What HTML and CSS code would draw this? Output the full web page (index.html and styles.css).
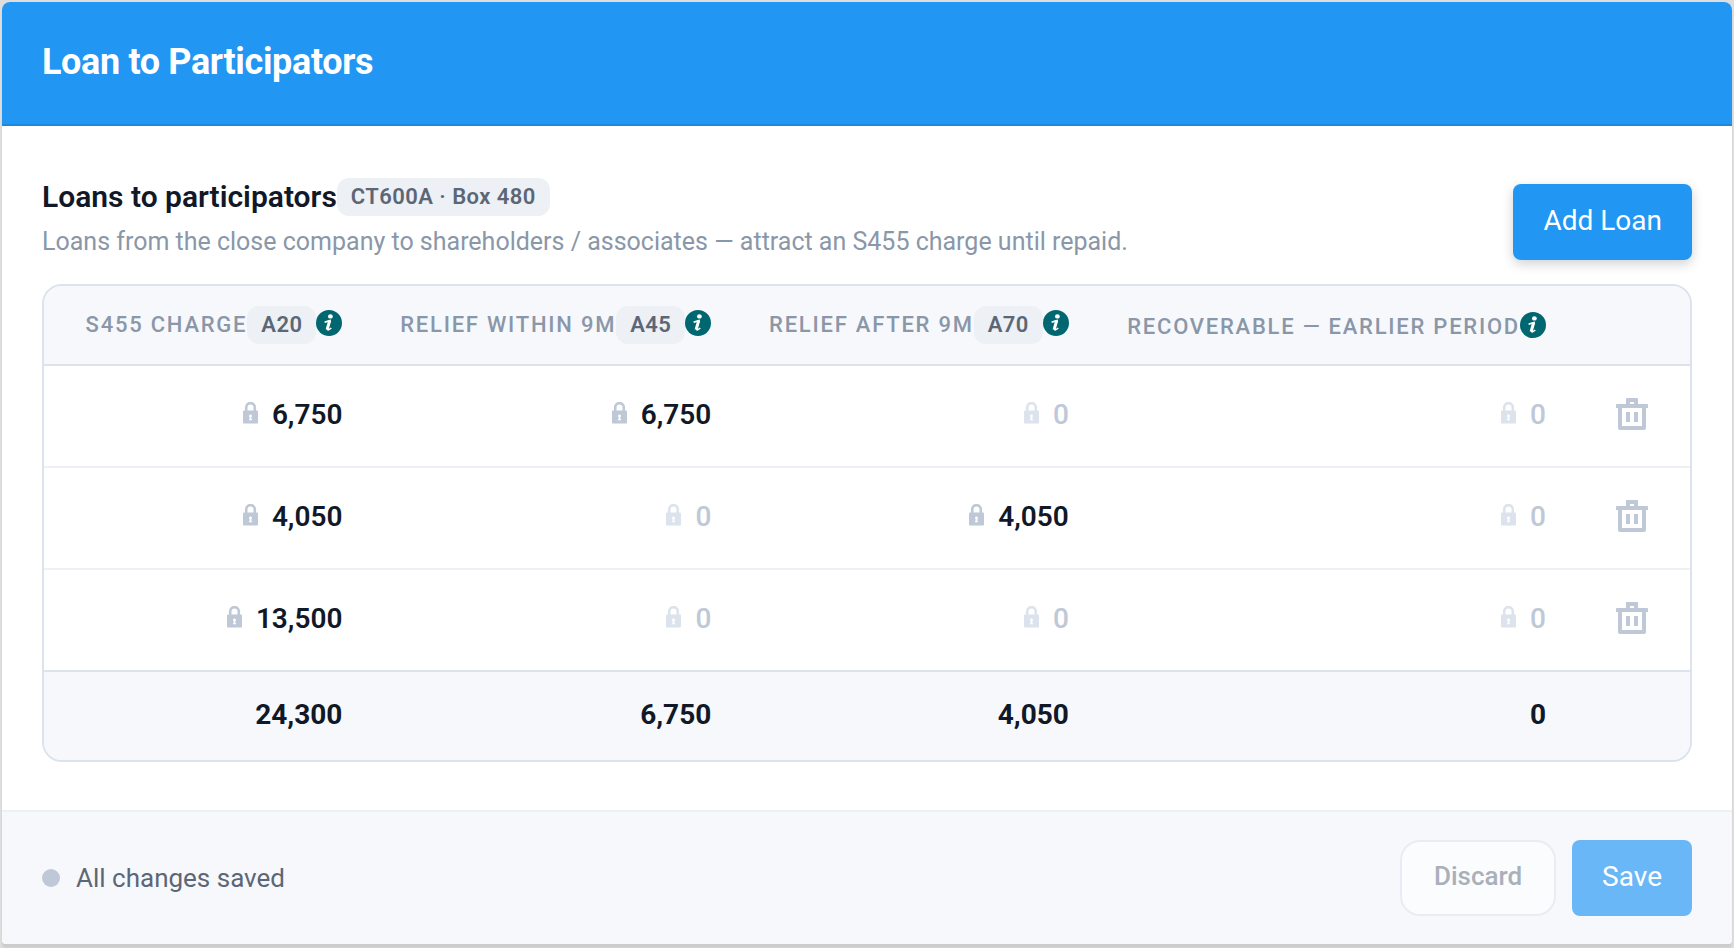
FILE: index.html
```html
<!DOCTYPE html>
<html lang="en">
<head>
    <meta charset="UTF-8">
    <meta name="viewport" content="width=device-width, initial-scale=1.0">
    <title>Loan to Participators</title>
    <link rel="stylesheet" href="styles.css">
</head>
<body>
    <!-- Shared icons -->
    <svg class="sprite" aria-hidden="true">
        <symbol id="icon-info" viewBox="0 0 26 26">
            <circle cx="13" cy="13" r="13" fill="#006770"/>
            <ellipse cx="14.4" cy="6.4" rx="2.4" ry="2.2" fill="#fff"/>
            <path d="M8.6 12.2q2.6-1 5.4-1.6l-2.2 7.6q-.5 2 .8 1.6.9-.3 2.7-1.8" fill="none" stroke="#fff" stroke-width="1.6"/>
            <path d="M13.7 10.6l-2.6 9" stroke="#fff" stroke-width="3"/>
        </symbol>
        <symbol id="icon-lock" viewBox="0 0 15 22">
            <path d="M3.2 9V5.4a4.3 4.3 0 0 1 8.6 0V9" fill="none" stroke="currentColor" stroke-width="2.6"/>
            <rect x="0" y="8.5" width="15" height="13" rx="1" fill="currentColor"/>
            <path d="M7.5 12.4a1.5 1.5 0 0 1 .9 2.7v2.2h.7v1H5.9v-1h.7v-2.2a1.5 1.5 0 0 1 .9-2.7z" fill="#fff"/>
        </symbol>
        <symbol id="icon-trash" viewBox="0 0 34 32">
            <path fill-rule="evenodd" fill="currentColor" d="M12 0h10q1 0 1 1v5h9q1 0 1 1v3h-2v20q0 2-2 2H5q-2 0-2-2V10H1V7q0-1 1-1h9V1q0-1 1-1zM15 4v2h4V4zM7 10v18h20V10z"/>
            <path fill="currentColor" d="M11 14h4v10h-4zM19 14h4v10h-4z"/>
        </symbol>
    </svg>

    <div class="card">
        <header class="card-header">
            <h1>Loan to Participators</h1>
        </header>

        <main class="card-body">
            <div class="section-head">
                <div>
                    <h2>Loans to participators<span class="tag">CT600A · Box 480</span></h2>
                    <p>Loans from the close company to shareholders / associates — attract an S455 charge until repaid.</p>
                </div>
                <button type="button" class="btn btn-primary btn-raised">Add Loan</button>
            </div>

            <div class="table-wrap">
                <table>
                    <thead>
                        <tr>
                            <th scope="col">S455 charge<span class="tag">A20</span><svg class="info"><use href="#icon-info"/></svg></th>
                            <th scope="col">Relief within 9m<span class="tag">A45</span><svg class="info"><use href="#icon-info"/></svg></th>
                            <th scope="col">Relief after 9m<span class="tag">A70</span><svg class="info"><use href="#icon-info"/></svg></th>
                            <th scope="col">Recoverable — earlier period<svg class="info"><use href="#icon-info"/></svg></th>
                            <td class="actions"></td>
                        </tr>
                    </thead>
                    <tbody>
                        <tr>
                            <td><svg class="lock"><use href="#icon-lock"/></svg>6,750</td>
                            <td><svg class="lock"><use href="#icon-lock"/></svg>6,750</td>
                            <td class="zero"><svg class="lock"><use href="#icon-lock"/></svg>0</td>
                            <td class="zero"><svg class="lock"><use href="#icon-lock"/></svg>0</td>
                            <td class="actions"><button type="button" class="btn-icon" aria-label="Delete loan"><svg><use href="#icon-trash"/></svg></button></td>
                        </tr>
                        <tr>
                            <td><svg class="lock"><use href="#icon-lock"/></svg>4,050</td>
                            <td class="zero"><svg class="lock"><use href="#icon-lock"/></svg>0</td>
                            <td><svg class="lock"><use href="#icon-lock"/></svg>4,050</td>
                            <td class="zero"><svg class="lock"><use href="#icon-lock"/></svg>0</td>
                            <td class="actions"><button type="button" class="btn-icon" aria-label="Delete loan"><svg><use href="#icon-trash"/></svg></button></td>
                        </tr>
                        <tr>
                            <td><svg class="lock"><use href="#icon-lock"/></svg>13,500</td>
                            <td class="zero"><svg class="lock"><use href="#icon-lock"/></svg>0</td>
                            <td class="zero"><svg class="lock"><use href="#icon-lock"/></svg>0</td>
                            <td class="zero"><svg class="lock"><use href="#icon-lock"/></svg>0</td>
                            <td class="actions"><button type="button" class="btn-icon" aria-label="Delete loan"><svg><use href="#icon-trash"/></svg></button></td>
                        </tr>
                    </tbody>
                    <tfoot>
                        <tr>
                            <td>24,300</td>
                            <td>6,750</td>
                            <td>4,050</td>
                            <td>0</td>
                            <td class="actions"></td>
                        </tr>
                    </tfoot>
                </table>
            </div>
        </main>

        <footer class="card-footer">
            <div class="status"><span class="dot"></span>All changes saved</div>
            <div class="buttons">
                <button type="button" class="btn btn-outline" disabled>Discard</button>
                <button type="button" class="btn btn-primary" disabled>Save</button>
            </div>
        </footer>
    </div>
</body>
</html>
```
FILE: styles.css
```css
* { margin: 0; padding: 0; box-sizing: border-box; }
body {
    font-family: Roboto, sans-serif;
    background: #dedede;
    color: #111827;
    padding: 2px 2px 4px;
}
.sprite {
    display: none;
}
.card {
    background: white;
    border-radius: 8px 8px 4px 4px;
    overflow: hidden;
    box-shadow: 0 4px 2px rgba(0, 0, 0, 0.08);
}
.card-header {
    background: #2196f3;
    border-bottom: 2px solid #1e88dc;
    padding: 38px 40px 40px;
}
h1 {
    font-size: 36px;
    font-weight: 700;
    line-height: 44px;
    letter-spacing: -0.01em;
    color: white;
}
.card-body {
    padding: 52px 40px 48px;
}

/* Section heading */
.section-head {
    display: flex;
    justify-content: space-between;
    align-items: flex-end;
    margin-bottom: 24px;
}
h2 {
    display: flex;
    align-items: center;
    font-size: 30px;
    font-weight: 600;
    line-height: 38px;
    margin-bottom: 8px;
}
.section-head p {
    font-size: 25px;
    line-height: 36px;
    color: #8a97a8;
}
.tag {
    display: inline-block;
    padding: 0 14px;
    border-radius: 12px;
    background: #edf0f5;
    color: #5b6776;
    font-size: 22px;
    font-weight: 600;
    line-height: 38px;
    letter-spacing: 0.02em;
}

/* Buttons */
.btn {
    height: 76px;
    padding: 0 30px 4px;
    border: none;
    border-radius: 8px;
    font-family: inherit;
    font-size: 28px;
    cursor: pointer;
}
.btn:disabled {
    cursor: default;
}
.btn-primary {
    background: #2196f3;
    color: white;
}
.btn-primary:disabled {
    background: #6ab7f7;
}
.btn-raised {
    box-shadow: 0 4px 12px rgba(0, 0, 0, 0.18);
}
.btn-outline {
    padding: 0 32px 4px;
    border: 2px solid #e8edf4;
    border-radius: 20px;
    background: #fbfcfe;
    color: #a9b0ba;
    font-size: 26px;
    font-weight: 500;
}
.btn-icon {
    display: block;
    margin: 0 auto;
    border: none;
    background: none;
    color: #bec8d6;
    cursor: pointer;
}
.btn-icon svg {
    display: block;
    width: 34px;
    height: 32px;
}

/* Loans table */
.table-wrap {
    border: 2px solid #dce3ed;
    border-radius: 20px;
    overflow: hidden;
}
table {
    width: 100%;
    border-collapse: separate;
    border-spacing: 0;
}
th, td {
    padding: 0 28px;
    text-align: right;
    white-space: nowrap;
}
th:first-child, td:first-child {
    padding-left: 40px;
}
thead th, thead td {
    height: 80px;
    background: #f7f8fc;
    border-bottom: 2px solid #dce3ed;
}
th {
    font-size: 22px;
    font-weight: 500;
    letter-spacing: 0.08em;
    text-transform: uppercase;
    color: #8a97a8;
}
.info {
    width: 26px;
    height: 26px;
    vertical-align: -4px;
}
tbody td {
    height: 102px;
    padding-bottom: 4px;
    border-bottom: 2px solid #edf0f5;
    font-size: 28px;
    font-weight: 600;
}
tbody tr:last-child td {
    border-bottom-color: #dce3ed;
}
.lock {
    width: 15px;
    height: 22px;
    margin-right: 14px;
    color: #bec8d6;
}
.zero {
    color: #bec8d6;
    font-weight: 500;
}
.zero .lock {
    color: #dce3ed;
}
tfoot td {
    height: 88px;
    padding-bottom: 4px;
    background: #f7f8fc;
    font-size: 28px;
    font-weight: 700;
}
th.actions, td.actions {
    width: 116px;
}

/* Footer bar */
.card-footer {
    display: flex;
    justify-content: space-between;
    align-items: center;
    padding: 28px 40px;
    border-top: 2px solid #edf0f5;
    background: #f7f8fc;
}
.status {
    display: flex;
    align-items: center;
    gap: 16px;
    font-size: 26px;
    color: #5b6776;
}
.dot {
    width: 18px;
    height: 18px;
    border-radius: 50%;
    background: #bec8d6;
}
.buttons {
    display: flex;
    gap: 16px;
}
@media (max-width: 1200px) {
    .table-wrap {
        overflow-x: auto;
    }
}
```
